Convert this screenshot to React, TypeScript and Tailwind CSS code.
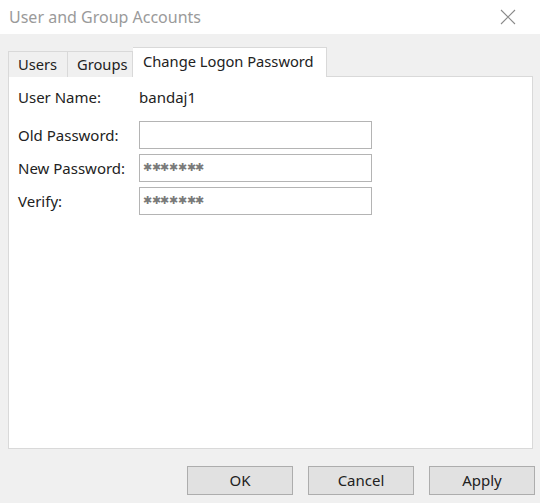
import React from "react";

const font = { fontFamily: '"Noto Sans", "Open Sans", sans-serif' };

export default function App() {
  return (
    <div className="w-[540px] h-[503px] bg-[#f0f0f0] flex flex-col overflow-hidden" style={font}>
      <div className="h-[34px] bg-white flex items-center justify-between pl-[9px] pr-[24px] shrink-0">
        <span className="text-[16px] text-[#9a9a9a] leading-none">User and Group Accounts</span>
        <svg width="16" height="16" viewBox="0 0 16 16" className="text-[#8a8a8a]">
          <path d="M1 1 L15 15 M15 1 L1 15" stroke="currentColor" strokeWidth="1.1" fill="none" />
        </svg>
      </div>
      <div className="pl-[8px] pr-[7px] pt-[14px]">
        <div className="flex items-end h-[29px] relative z-10 -mb-px">
          <div className="w-[60px] h-[26px] pl-[9px] flex items-center border border-[#d9d9d9] border-b-0 bg-[#f0f0f0] text-[14.7px] text-[#222]">
            Users
          </div>
          <div className="w-[65px] h-[26px] pl-[9px] flex items-center border border-[#d9d9d9] border-l-0 border-b-0 bg-[#f0f0f0] text-[14.7px] text-[#222]">
            Groups
          </div>
          <div className="w-[194px] h-[30px] pl-[10px] flex items-center border border-[#d9d9d9] border-l-0 border-b-0 bg-white text-[14.7px] text-[#222] pb-[2px]">
            Change Logon Password
          </div>
        </div>
        <div className="h-[373px] bg-white border border-[#d9d9d9] pl-[9px] pt-[6px]">
          <div className="grid grid-cols-[121px_233px] gap-y-[5px] text-[15px] text-[#222]">
            <div className="h-[28px] flex items-center">User Name:</div>
            <div className="h-[28px] flex items-center">bandaj1</div>
            <div className="h-[28px] flex items-center mt-[5px]">Old Password:</div>
            <div className="h-[28px] border border-[#b4b4b4] bg-white mt-[5px]"></div>
            <div className="h-[28px] flex items-center">New Password:</div>
            <div className="h-[28px] border border-[#b4b4b4] bg-white flex items-center pl-[3px] text-[10.5px] text-[#7a7a7a] tracking-[-0.3px]">✱✱✱✱✱✱✱</div>
            <div className="h-[28px] flex items-center">Verify:</div>
            <div className="h-[28px] border border-[#b4b4b4] bg-white flex items-center pl-[3px] text-[10.5px] text-[#7a7a7a] tracking-[-0.3px]">✱✱✱✱✱✱✱</div>
          </div>
        </div>
        <div className="flex justify-end gap-[15px] mt-[17px] -mr-[2px]">
          {["OK", "Cancel", "Apply"].map((t) => (
            <div key={t} className="w-[106px] h-[29px] border border-[#adadad] bg-[#e1e1e1] flex items-center justify-center text-[15px] text-[#222]">
              {t}
            </div>
          ))}
        </div>
      </div>
    </div>
  );
}
